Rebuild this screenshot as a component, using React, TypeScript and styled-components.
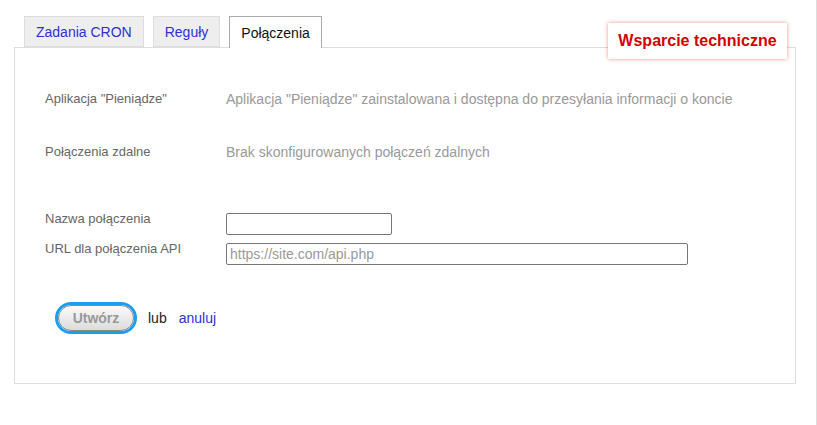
import * as React from 'react';
import styled, { createGlobalStyle } from 'styled-components';

const GlobalStyle = createGlobalStyle`
  html, body {
    margin: 0;
    padding: 0;
    background: #fff;
    font-family: "Liberation Sans", Arial, sans-serif;
  }
`;

const tabs = [
  { id: 'cron', label: 'Zadania CRON' },
  { id: 'rules', label: 'Reguły' },
  { id: 'conn', label: 'Połączenia' },
];

export default function App() {
  const active = 'conn';

  return (
    <Page>
      <GlobalStyle />
      <TabBar>
        {tabs.map((t) => (
          <Tab key={t.id} $active={t.id === active}>
            {t.label}
          </Tab>
        ))}
      </TabBar>

      <Panel>
        <SupportBadge>Wsparcie techniczne</SupportBadge>

        <InfoList>
          <InfoRow>
            <Label>Aplikacja "Pieniądze"</Label>
            <Value>Aplikacja "Pieniądze" zainstalowana i dostępna do przesyłania informacji o koncie</Value>
          </InfoRow>
          <InfoRow>
            <Label>Połączenia zdalne</Label>
            <Value>Brak skonfigurowanych połączeń zdalnych</Value>
          </InfoRow>
        </InfoList>

        <Form>
          <FormRow>
            <FieldLabel>Nazwa połączenia</FieldLabel>
            <Input $width={166} />
          </FormRow>
          <FormRow>
            <FieldLabel>URL dla połączenia API</FieldLabel>
            <Input $width={462} placeholder="https://site.com/api.php" />
          </FormRow>
        </Form>

        <Actions>
          <CreateButton>Utwórz</CreateButton>
          <Or>lub</Or>
          <CancelLink href="#">anuluj</CancelLink>
        </Actions>
      </Panel>
    </Page>
  );
}

const Page = styled.div`
  width: 817px;
  min-height: 425px;
  box-sizing: border-box;
  padding: 16px 0 0 14px;
  border-right: 1px solid #ddd;
`;

const TabBar = styled.div`
  display: flex;
  gap: 9px;
  margin-left: 10px;
  position: relative;
  z-index: 1;
`;

const Tab = styled.div<{ $active?: boolean }>`
  box-sizing: border-box;
  height: ${({ $active }) => ($active ? '32px' : '31px')};
  padding: 0 11px;
  display: flex;
  align-items: center;
  font-size: 14px;
  color: ${({ $active }) => ($active ? '#111' : '#2f2fd8')};
  background: ${({ $active }) => ($active ? '#fff' : '#eee')};
  border: 1px solid ${({ $active }) => ($active ? '#aaa' : '#ddd')};
  border-bottom: ${({ $active }) => ($active ? 'none' : '1px solid #ddd')};
  cursor: pointer;
`;

const Panel = styled.div`
  position: relative;
  box-sizing: border-box;
  width: 782px;
  height: 337px;
  margin-top: -1px;
  border: 1px solid #ddd;
  padding: 42px 0 0 30px;
  display: flex;
  flex-direction: column;
`;

const SupportBadge = styled.div`
  position: absolute;
  top: -25px;
  right: 8px;
  box-sizing: border-box;
  width: 179px;
  height: 36px;
  display: flex;
  align-items: center;
  justify-content: center;
  background: #fff;
  color: #d40000;
  font-weight: bold;
  font-size: 16px;
  box-shadow: 0 0 4px rgba(230, 0, 0, 0.45);
`;

const InfoList = styled.div`
  display: flex;
  flex-direction: column;
  gap: 35px;
`;

const InfoRow = styled.div`
  display: grid;
  grid-template-columns: 181px 1fr;
  line-height: 18px;
`;

const Label = styled.div`
  color: #666;
  font-size: 13px;
  line-height: 18px;
`;

const Value = styled.div`
  color: #999;
  font-size: 14px;
`;

const Form = styled.div`
  margin-top: 52px;
  display: flex;
  flex-direction: column;
  gap: 8px;
`;

const FormRow = styled.div`
  display: grid;
  grid-template-columns: 181px auto;
  align-items: start;
  justify-items: start;
`;

const FieldLabel = styled(Label)`
  line-height: 12px;
`;

const Input = styled.input<{ $width: number }>`
  box-sizing: border-box;
  width: ${({ $width }) => $width}px;
  height: 22px;
  margin: 0;
  padding: 1px 3px;
  border: 1px solid #767676;
  border-radius: 2px;
  font-family: "Liberation Sans", Arial, sans-serif;
  font-size: 14px;
  color: #333;

  &::placeholder {
    color: #999;
  }
`;

const Actions = styled.div`
  display: flex;
  align-items: center;
  margin-top: 40px;
  margin-left: 13px;
  font-size: 14px;
`;

const CreateButton = styled.button`
  box-sizing: border-box;
  width: 76px;
  height: 26px;
  border: 1px solid #888;
  border-radius: 13px;
  background: linear-gradient(#fafafa, #dcdcdc);
  box-shadow: 0 0 0 3px #1a9ef2;
  color: #999;
  font-family: "Liberation Sans", Arial, sans-serif;
  font-weight: bold;
  font-size: 14px;
  cursor: pointer;
`;

const Or = styled.span`
  margin-left: 14px;
  color: #222;
`;

const CancelLink = styled.a`
  margin-left: 12px;
  color: #2f2fd8;
  text-decoration: none;
`;
